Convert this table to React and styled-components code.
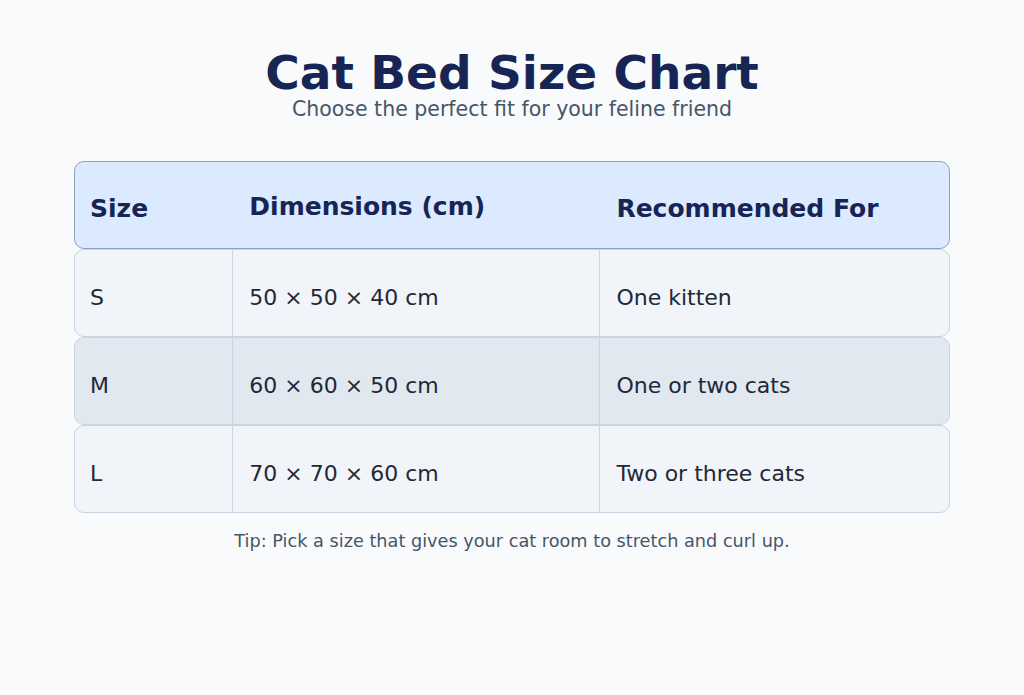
import React from 'react';
import styled, { createGlobalStyle } from 'styled-components';

const GlobalStyle = createGlobalStyle`
  html, body {
    margin: 0;
    padding: 0;
    background: #f8fafc;
    font-family: "DejaVu Sans", Verdana, sans-serif;
  }
`;

const sizes = [
  { size: 'S', dims: '50 × 50 × 40 cm', fit: 'One kitten' },
  { size: 'M', dims: '60 × 60 × 50 cm', fit: 'One or two cats' },
  { size: 'L', dims: '70 × 70 × 60 cm', fit: 'Two or three cats' },
];

const App = () => {
  return (
    <>
      <GlobalStyle />
      <Page>
        <Title>Cat Bed Size Chart</Title>
        <Subtitle>Choose the perfect fit for your feline friend</Subtitle>
        <Table>
          <HeaderRow>
            <HeadCell>Size</HeadCell>
            <HeadCell wide lift>Dimensions (cm)</HeadCell>
            <HeadCell wide>Recommended For</HeadCell>
          </HeaderRow>
          {sizes.map((row, i) => (
            <Row key={row.size} alt={i % 2 === 1}>
              <Cell>{row.size}</Cell>
              <Cell divider>{row.dims}</Cell>
              <Cell divider>{row.fit}</Cell>
            </Row>
          ))}
        </Table>
        <Tip>Tip: Pick a size that gives your cat room to stretch and curl up.</Tip>
      </Page>
    </>
  );
};

const Page = styled.main`
  display: flex;
  flex-direction: column;
  align-items: center;
  padding-top: 50px;
  min-height: 695px;
  box-sizing: border-box;
`;

const Title = styled.h1`
  margin: 0;
  font-size: 47px;
  line-height: 46px;
  font-weight: 700;
  color: #172554;
`;

const Subtitle = styled.p`
  margin: 1px 0 0;
  font-size: 20.5px;
  line-height: 24px;
  color: #475569;
`;

const Table = styled.div`
  width: 876px;
  margin-top: 40px;
  display: flex;
  flex-direction: column;
`;

const Grid = styled.div`
  display: grid;
  grid-template-columns: 18% 42% 40%;
  height: 88px;
  box-sizing: border-box;
  border-radius: 10px;
  overflow: hidden;
`;

const HeaderRow = styled(Grid)`
  background: #dbeafe;
  border: 1px solid #8c9fbb;
`;

const Row = styled(Grid).withConfig({
  shouldForwardProp: (prop) => prop !== 'alt',
})`
  background: ${(p) => (p.alt ? '#e2e8f0' : '#f1f5f9')};
  border: 1px solid #cbd5e1;
`;

const HeadCell = styled.div.withConfig({
  shouldForwardProp: (prop) => prop !== 'wide' && prop !== 'lift',
})`
  display: flex;
  align-items: center;
  padding: ${(p) => (p.lift ? '2px' : '6px')} 15px 0 ${(p) => (p.wide ? '17px' : '15px')};
  font-size: 25px;
  font-weight: 700;
  color: #172554;
`;

const Cell = styled.div.withConfig({
  shouldForwardProp: (prop) => prop !== 'divider',
})`
  display: flex;
  align-items: center;
  padding: 9px 15px 0 ${(p) => (p.divider ? '16px' : '15px')};
  font-size: 22px;
  color: #1f2937;
  border-left: ${(p) => (p.divider ? '1px solid #cbd5e1' : 'none')};
`;

const Tip = styled.p`
  margin: 18px 0 0;
  font-size: 17.7px;
  line-height: 20px;
  color: #475569;
`;

export default App;
